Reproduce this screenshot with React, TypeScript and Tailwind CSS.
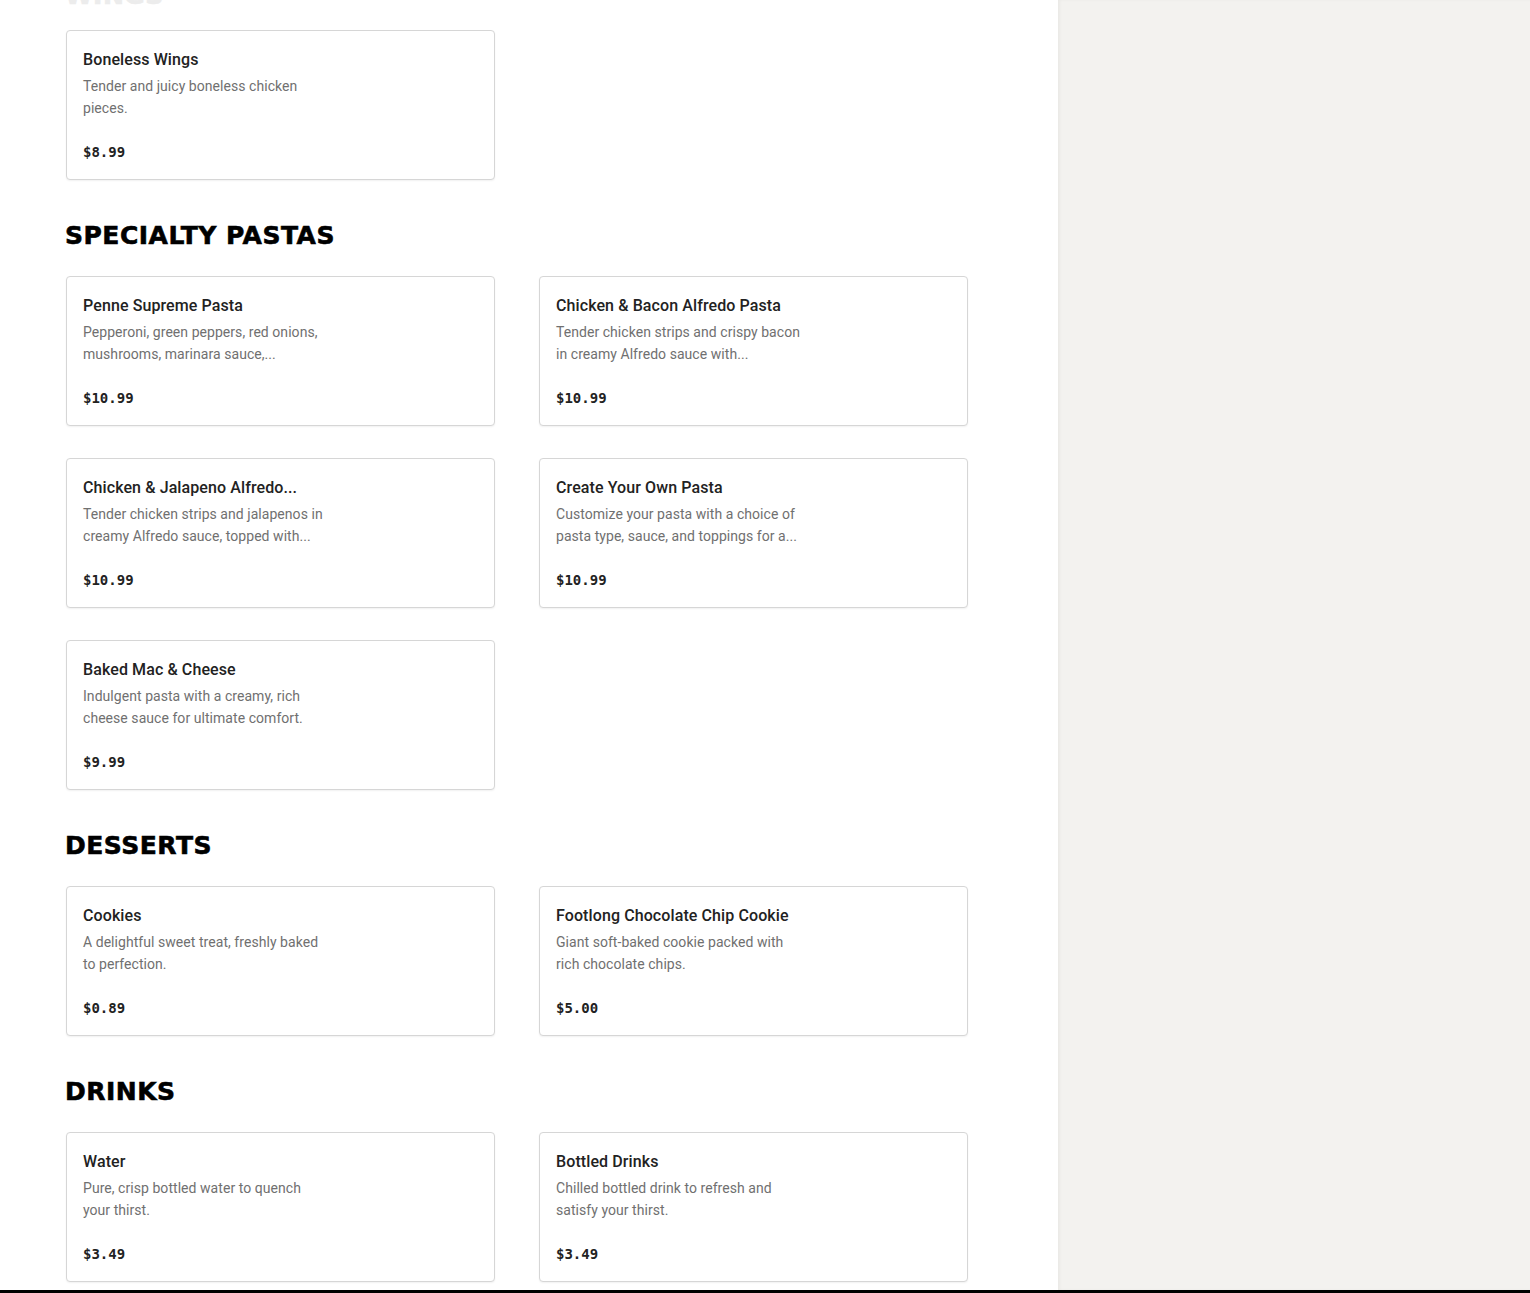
import React from 'react';

interface MenuItem {
  name: string;
  desc: [string, string];
  price: string;
}

interface Section {
  title: string;
  items: MenuItem[];
}

const sections: Section[] = [
  {
    title: 'WINGS',
    items: [
      { name: 'Boneless Wings', desc: ['Tender and juicy boneless chicken', 'pieces.'], price: '$8.99' },
    ],
  },
  {
    title: 'SPECIALTY PASTAS',
    items: [
      { name: 'Penne Supreme Pasta', desc: ['Pepperoni, green peppers, red onions,', 'mushrooms, marinara sauce,...'], price: '$10.99' },
      { name: 'Chicken & Bacon Alfredo Pasta', desc: ['Tender chicken strips and crispy bacon', 'in creamy Alfredo sauce with...'], price: '$10.99' },
      { name: 'Chicken & Jalapeno Alfredo...', desc: ['Tender chicken strips and jalapenos in', 'creamy Alfredo sauce, topped with...'], price: '$10.99' },
      { name: 'Create Your Own Pasta', desc: ['Customize your pasta with a choice of', 'pasta type, sauce, and toppings for a...'], price: '$10.99' },
      { name: 'Baked Mac & Cheese', desc: ['Indulgent pasta with a creamy, rich', 'cheese sauce for ultimate comfort.'], price: '$9.99' },
    ],
  },
  {
    title: 'DESSERTS',
    items: [
      { name: 'Cookies', desc: ['A delightful sweet treat, freshly baked', 'to perfection.'], price: '$0.89' },
      { name: 'Footlong Chocolate Chip Cookie', desc: ['Giant soft-baked cookie packed with', 'rich chocolate chips.'], price: '$5.00' },
    ],
  },
  {
    title: 'DRINKS',
    items: [
      { name: 'Water', desc: ['Pure, crisp bottled water to quench', 'your thirst.'], price: '$3.49' },
      { name: 'Bottled Drinks', desc: ['Chilled bottled drink to refresh and', 'satisfy your thirst.'], price: '$3.49' },
    ],
  },
];

const ItemCard: React.FC<{ item: MenuItem }> = ({ item }) => (
  <div className="h-[150px] rounded-[4px] border border-[#d6d6d6] bg-white px-4 pt-[17px] shadow-[0_1px_2px_rgba(0,0,0,0.06)]">
    <div className="whitespace-nowrap font-['Roboto',sans-serif] text-[16px] font-medium leading-6 tracking-[0.1px] text-[#222]">{item.name}</div>
    <div className="mt-[3px] font-['Roboto',sans-serif] text-[14px] leading-[22px] tracking-[0.05px] text-[#707070]">
      <div className="whitespace-nowrap">{item.desc[0]}</div>
      <div className="whitespace-nowrap">{item.desc[1]}</div>
    </div>
    <div className="mt-[23px] font-['DejaVu_Sans_Mono',monospace] text-[14px] font-bold leading-5 text-[#222]">{item.price}</div>
  </div>
);

export default function App() {
  return (
    <div className="min-h-screen overflow-hidden bg-white">
      <div className="flex">
        <main className="w-[1058px] shrink-0 bg-white pb-2 pl-[66px]">
          {sections.map((s, i) => (
            <section key={s.title} className={i === 0 ? 'mt-[-20px]' : 'mt-10'}>
              <h2
                className={`-ml-px font-['DejaVu_Sans',sans-serif] text-[25px] font-bold leading-8 tracking-[0.5px] [-webkit-text-stroke:0.6px_currentColor] ${
                  i === 0 ? 'mb-[18px] text-[#ececec]' : 'mb-6 text-black'
                }`}
              >
                {s.title}
              </h2>
              <div className="grid grid-cols-[429px_429px] gap-x-[44px] gap-y-8">
                {s.items.map(item => (
                  <ItemCard key={item.name} item={item} />
                ))}
              </div>
            </section>
          ))}
        </main>
        <aside className="flex-1 bg-[#f3f2ef] shadow-[inset_2px_0_3px_rgba(0,0,0,0.04)]" />
      </div>
      <div className="h-[20px] bg-black" />
    </div>
  );
}
